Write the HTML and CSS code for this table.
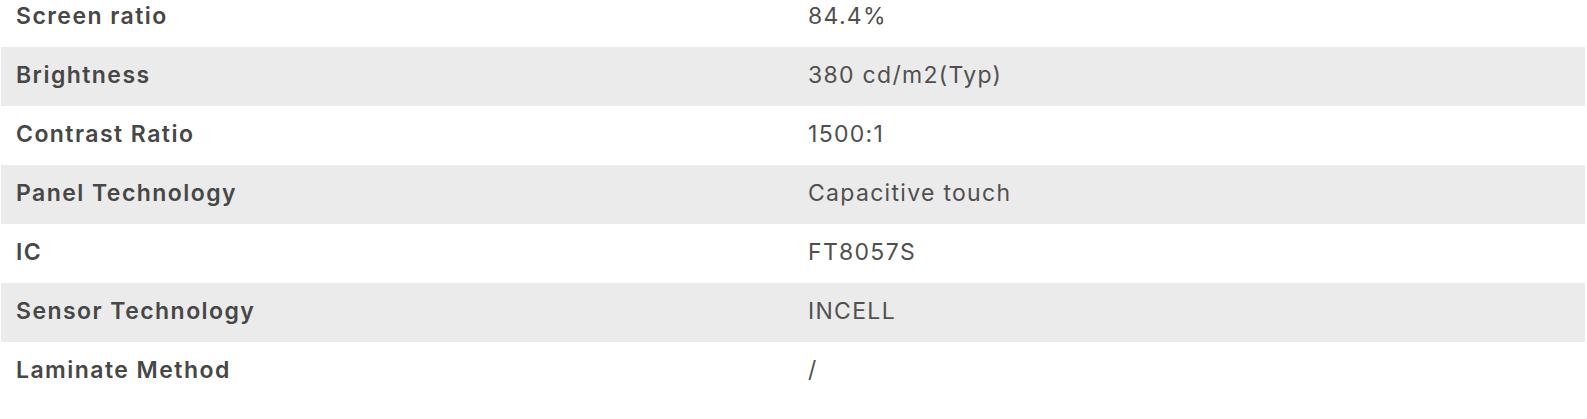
FILE: index.html
```html
<!DOCTYPE html>
<html lang="en">
<head>
<meta charset="utf-8">
<title>Specifications</title>
<link rel="stylesheet" href="styles.css">
</head>
<body>
<div class="page">
  <table class="specs">
    <tbody>
      <tr><th>Screen ratio</th><td>84.4%</td></tr>
      <tr class="alt"><th>Brightness</th><td>380 cd/m2(Typ)</td></tr>
      <tr><th>Contrast Ratio</th><td>1500:1</td></tr>
      <tr class="alt"><th>Panel Technology</th><td>Capacitive touch</td></tr>
      <tr><th>IC</th><td>FT8057S</td></tr>
      <tr class="alt"><th>Sensor Technology</th><td>INCELL</td></tr>
      <tr><th>Laminate Method</th><td>/</td></tr>
    </tbody>
  </table>
</div>
</body>
</html>
```
FILE: styles.css
```css
html, body {
  margin: 0;
  padding: 0;
  background: #ffffff;
}
.page {
  padding: 0 2px 0 1px;
  margin-top: -12px;
}
.specs {
  width: 100%;
  border-collapse: collapse;
  table-layout: fixed;
  font-family: Inter, "Liberation Sans", sans-serif;
  font-size: 23px;
  color: #4a4a4a;
}
.specs th,
.specs td {
  height: 59px;
  padding: 0 15px 4px;
  box-sizing: border-box;
  text-align: left;
  vertical-align: middle;
  width: 50%;
}
.specs th {
  font-weight: 600;
  letter-spacing: 1.45px;
  color: #474747;
}
.specs td {
  font-weight: 400;
  letter-spacing: 1.3px;
  color: #505050;
}
.specs tr.alt {
  background: #ebebeb;
}
```
